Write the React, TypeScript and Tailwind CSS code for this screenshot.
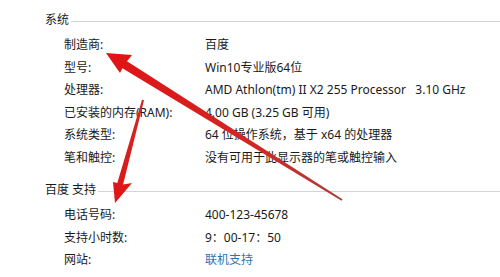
const systemRows = [
  { label: '制造商:', value: '百度' },
  { label: '型号:', value: 'Win10专业版64位' },
  { label: '处理器:', value: 'AMD Athlon(tm) II X2 255 Processor\u00a0\u00a0\u00a03.10 GHz' },
  { label: '已安装的内存(RAM):', value: '4.00 GB (3.25 GB 可用)' },
  { label: '系统类型:', value: '64 位操作系统，基于 x64 的处理器' },
  { label: '笔和触控:', value: '没有可用于此显示器的笔或触控输入' },
]

const supportRows = [
  { label: '电话号码:', value: '400-123-45678' },
  { label: '支持小时数:', value: '9：00-17：50' },
  { label: '网站:', value: '联机支持', link: true },
]

function SectionHeader({ title }: { title: string }) {
  return (
    <div className="flex h-[22px] items-center pl-[45px]">
      <span className="text-[#1a1a1a]">{title}</span>
      <div className="ml-[2px] mt-[3px] h-px flex-1 bg-[#d4d4d4]" />
    </div>
  )
}

function InfoRow({ label, value, link }: { label: string; value: string; link?: boolean }) {
  return (
    <div className="flex h-[22.5px] items-center pl-[64px]">
      <span className="w-[141px] shrink-0 text-[#1a1a1a]">{label}</span>
      <span className={link ? 'text-[#2a73b5]' : 'text-[#1a1a1a]'}>{value}</span>
    </div>
  )
}

function Arrows() {
  return (
    <svg className="pointer-events-none absolute inset-0" width="500" height="277" viewBox="0 0 500 277">
      <defs>
        <linearGradient id="a1" x1="106" y1="53" x2="342" y2="200" gradientUnits="userSpaceOnUse">
          <stop offset="0" stopColor="#e01414" />
          <stop offset="0.6" stopColor="#d42424" />
          <stop offset="1" stopColor="#a8403a" />
        </linearGradient>
        <linearGradient id="a2" x1="115" y1="203" x2="143" y2="100" gradientUnits="userSpaceOnUse">
          <stop offset="0" stopColor="#e01414" />
          <stop offset="1" stopColor="#cc2a2a" />
        </linearGradient>
      </defs>
      <polygon
        points="106,53 132,55 127,61.2 342.5,199.2 341.5,200.8 122.4,68.2 120,73"
        fill="url(#a1)"
      />
      <polygon
        points="115,203 113,182 117.3,182.9 142,99.7 144,100.3 123.1,184.5 132,183"
        fill="url(#a2)"
      />
    </svg>
  )
}

export default function App() {
  return (
    <div
      className="relative h-[277px] w-[500px] overflow-hidden bg-white text-[12px] leading-none"
      style={{ fontFamily: '"Noto Sans", "Noto Sans CJK SC", sans-serif' }}
    >
      <div className="pt-[9px]">
        <SectionHeader title="系统" />
        <div className="mt-[3px]">
          {systemRows.map((r) => (
            <InfoRow key={r.label} label={r.label} value={r.value} />
          ))}
        </div>
        <div className="mt-[10px]">
          <SectionHeader title="百度 支持" />
        </div>
        <div className="mt-[3px]">
          {supportRows.map((r) => (
            <InfoRow key={r.label} label={r.label} value={r.value} link={r.link} />
          ))}
        </div>
      </div>
      <Arrows />
    </div>
  )
}
